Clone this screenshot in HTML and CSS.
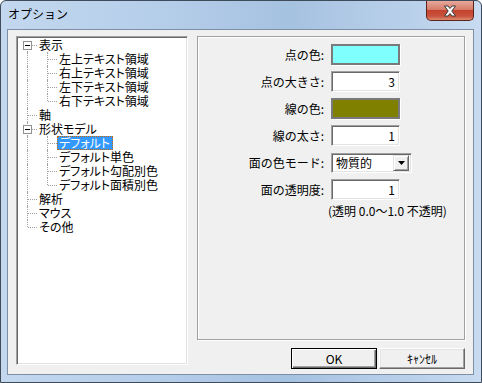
FILE: index.html
```html
<!DOCTYPE html>
<html lang="ja">
<head>
  <meta charset="UTF-8">
  <title>オプション</title>
  <link rel="stylesheet" href="styles.css">
</head>
<body>
  <div class="window">
    <div class="titlebar">
      <span class="title">オプション</span>
      <div class="close">
        <svg width="14" height="12" viewBox="0 0 14 12">
          <path d="M1.5 1h3.5l2 2.5L9 1h3.5L8.8 6l3.7 5H9L7 8.5 5 11H1.5l3.7-5z" fill="#fff" stroke="#3a3a3a" stroke-width="1" stroke-linejoin="round"/>
        </svg>
      </div>
    </div>

    <div class="client">
      <div class="tree">
        <div class="row"><span class="ind first"><i class="box"></i></span><span class="label">表示</span></div>
        <div class="row"><span class="ind pipe"></span><span class="ind tee"></span><span class="label">左上テキスト領域</span></div>
        <div class="row"><span class="ind pipe"></span><span class="ind tee"></span><span class="label">右上テキスト領域</span></div>
        <div class="row"><span class="ind pipe"></span><span class="ind tee"></span><span class="label">左下テキスト領域</span></div>
        <div class="row"><span class="ind pipe"></span><span class="ind elbow"></span><span class="label">右下テキスト領域</span></div>
        <div class="row"><span class="ind tee"></span><span class="label">軸</span></div>
        <div class="row"><span class="ind tee"><i class="box"></i></span><span class="label">形状モデル</span></div>
        <div class="row"><span class="ind pipe"></span><span class="ind tee"></span><span class="label selected">デフォルト</span></div>
        <div class="row"><span class="ind pipe"></span><span class="ind tee"></span><span class="label">デフォルト単色</span></div>
        <div class="row"><span class="ind pipe"></span><span class="ind tee"></span><span class="label">デフォルト勾配別色</span></div>
        <div class="row"><span class="ind pipe"></span><span class="ind elbow"></span><span class="label">デフォルト面積別色</span></div>
        <div class="row"><span class="ind tee"></span><span class="label">解析</span></div>
        <div class="row"><span class="ind tee"></span><span class="label">マウス</span></div>
        <div class="row"><span class="ind elbow"></span><span class="label">その他</span></div>
      </div>

      <div class="side">
        <div class="panel">
          <div class="form">
            <label>点の色:</label>
            <div class="swatch cyan"></div>

            <label>点の大きさ:</label>
            <div class="field">3</div>

            <label>線の色:</label>
            <div class="swatch olive"></div>

            <label>線の太さ:</label>
            <div class="field">1</div>

            <label>面の色モード:</label>
            <div class="combo">
              <span>物質的</span>
              <span class="drop"><svg width="7" height="4" viewBox="0 0 7 4"><path d="M0 0h7L3.5 4z" fill="#000"/></svg></span>
            </div>

            <label>面の透明度:</label>
            <div class="field">1</div>

            <span></span>
            <div class="hint">(透明 0.0～1.0 不透明)</div>
          </div>
        </div>
        <div class="buttons">
          <button class="default">OK</button>
          <button>ｷｬﾝｾﾙ</button>
        </div>
      </div>
    </div>
  </div>
</body>
</html>
```

FILE: styles.css
```css
body {
  margin: 0;
  font-family: "Noto Sans CJK JP", "Liberation Sans", sans-serif;
  font-size: 12px;
  color: #000;
  background: #fff;
}
.window {
  box-sizing: border-box;
  width: 482px;
  height: 383px;
  border: 1px solid #3d4b5b;
  border-radius: 6px 6px 0 0;
  background: linear-gradient(to right, #c3d8ef 0%, #b4cde9 35%, #a6c2e1 60%, #b9d0ea 85%, #c8dbf0 100%);
  display: flex;
  flex-direction: column;
}
.titlebar {
  height: 28px;
  display: flex;
  justify-content: space-between;
  align-items: flex-start;
}
.title {
  padding: 5px 0 0 7px;
  line-height: 16px;
}
.close {
  width: 46px;
  height: 19px;
  margin-right: 7px;
  border: 1px solid #5d2219;
  border-top: none;
  border-radius: 0 0 5px 5px;
  background: linear-gradient(#e7a89b 0%, #d77c6a 45%, #c4432f 50%, #c9533d 80%, #dc8d6f 100%);
  display: flex;
  align-items: center;
  justify-content: center;
}
.client {
  flex: 1;
  margin: 0 7px 7px 6px;
  border: 1px solid #7d8fa5;
  background: #f0f0f0;
  padding: 6px 7px 0 8px;
  display: flex;
  gap: 9px;
}

/* tree */
.tree {
  box-sizing: border-box;
  width: 172px;
  height: 329px;
  background: #fff;
  border: 1px solid;
  border-color: #a0a0a0 #fff #fff #a0a0a0;
  box-shadow: inset 1px 1px 0 #696969, inset -1px -1px 0 #e3e3e3;
  padding: 1px 0 0 1px;
  font-feature-settings: "palt";
}
.row {
  display: flex;
  height: 14px;
}
.ind {
  position: relative;
  width: 20px;
  flex: none;
}
.ind::before,
.ind::after {
  content: "";
  position: absolute;
}
.pipe::before,
.tee::before {
  left: 9px;
  top: 0;
  height: 14px;
  border-left: 1px dotted #a0a0a0;
}
.elbow::before {
  left: 9px;
  top: 0;
  height: 7px;
  border-left: 1px dotted #a0a0a0;
}
.first::before {
  left: 9px;
  top: 7px;
  height: 7px;
  border-left: 1px dotted #a0a0a0;
}
.tee::after,
.elbow::after,
.first::after {
  left: 10px;
  top: 7px;
  width: 9px;
  border-top: 1px dotted #a0a0a0;
}
.box {
  position: absolute;
  z-index: 1;
  left: 5px;
  top: 3px;
  width: 7px;
  height: 7px;
  border: 1px solid #919191;
  background: #fff linear-gradient(#000, #000) no-repeat 1px 3px / 5px 1px;
}
.label {
  margin-left: -1px;
  padding: 0 3px 0 2px;
  height: 14px;
  line-height: 14px;
  white-space: nowrap;
}
.label.selected {
  background: #3399ff;
  color: #fff;
  outline: 1px dotted #cc6600;
  outline-offset: -1px;
}

/* right side */
.side {
  width: 268px;
  display: flex;
  flex-direction: column;
}
.panel {
  box-sizing: border-box;
  height: 304px;
  border: 1px solid #a0a0a0;
  box-shadow: inset 1px 1px 0 #fff, 1px 1px 0 #fff;
  padding: 7px 0 0 0;
}
.form {
  display: grid;
  grid-template-columns: 126px 81px;
  column-gap: 7px;
  row-gap: 6px;
  grid-auto-rows: 21px;
  align-items: center;
}
.form label {
  text-align: right;
  line-height: 14px;
}
.field,
.swatch,
.combo {
  box-sizing: border-box;
  height: 21px;
  border: 1px solid;
  border-color: #a0a0a0 #fff #fff #a0a0a0;
  box-shadow: inset 1px 1px 0 #696969, inset -1px -1px 0 #e3e3e3;
}
.field {
  width: 69px;
  background: #fff;
  text-align: right;
  padding: 2px 4px 0 0;
  line-height: 16px;
}
.swatch {
  width: 69px;
  border: 2px solid #7a7a7a;
  box-shadow: 1px 1px 0 #fff;
}
.cyan { background: #80ffff; }
.olive { background: #808000; }
.combo {
  width: 81px;
  height: 20px;
  background: #fff;
  display: flex;
  justify-content: space-between;
  align-items: center;
  padding: 0 2px 0 4px;
  line-height: 16px;
}
.drop {
  box-sizing: border-box;
  width: 16px;
  height: 16px;
  background: #f0f0f0;
  border: 1px solid;
  border-color: #e3e3e3 #696969 #696969 #e3e3e3;
  box-shadow: inset 1px 1px 0 #fff, inset -1px -1px 0 #a0a0a0;
  display: flex;
  align-items: center;
  justify-content: center;
}
.hint {
  grid-column: 2 / span 1;
  margin-left: -3px;
  white-space: nowrap;
  align-self: start;
  line-height: 14px;
  margin-top: -2px;
}
.buttons {
  margin-top: 8px;
  display: flex;
  justify-content: flex-end;
  gap: 2px;
}
button {
  box-sizing: border-box;
  width: 86px;
  height: 21px;
  font: inherit;
  background: #f0f0f0;
  border: 1px solid;
  border-color: #fff #696969 #696969 #fff;
  box-shadow: inset -1px -1px 0 #a0a0a0, inset 1px 1px 0 #e3e3e3;
  padding: 0;
  line-height: 16px;
}
button.default {
  border: 1px solid #000;
  box-shadow: inset 1px 1px 0 #fff, inset -1px -1px 0 #696969, inset -2px -2px 0 #a0a0a0;
}
```
